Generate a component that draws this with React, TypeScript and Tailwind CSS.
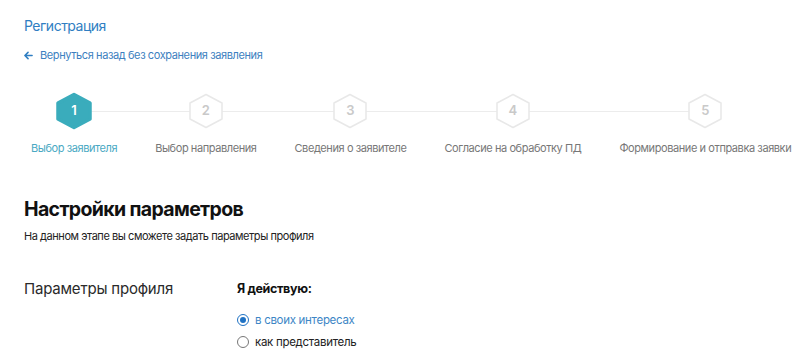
import React from "react";

const steps = [
  "Выбор заявителя",
  "Выбор направления",
  "Сведения о заявителе",
  "Согласие на обработку ПД",
  "Формирование и отправка заявки",
];

function Hex({ active, n }: { active: boolean; n: number }) {
  return (
    <div className="relative w-[38px] h-[38px] flex items-center justify-center">
      <svg width="38" height="38" viewBox="0 0 38 38" className="absolute inset-0">
        <polygon
          points="19,2.5 35,11 35,27 19,35.5 3,27 3,11"
          fill={active ? "#3aacbc" : "#ffffff"}
          stroke={active ? "#3aacbc" : "#e8e8e8"}
          strokeWidth={active ? 3.5 : 1.5}
          strokeLinejoin="round"
        />
      </svg>
      <span
        className={
          "relative text-[13px] font-semibold " +
          (active ? "text-white" : "text-[#c9c9c9]")
        }
      >
        {n}
      </span>
    </div>
  );
}

export default function App() {
  return (
    <div
      className="w-[800px] h-[360px] bg-white overflow-hidden pl-[24px] pt-[16px]"
      style={{ fontFamily: "Inter, 'Noto Sans', sans-serif" }}
    >
      <div className="text-[14px] leading-[20px] tracking-[-0.5px] text-[#2f7ec2]">Регистрация</div>
      <div className="mt-[11px] flex items-center gap-[7px] text-[11px] leading-[16px] tracking-[-0.4px] text-[#3d7fc0]">
        <svg width="9" height="9" viewBox="0 0 10 10" fill="none" stroke="#2f7ec2" strokeWidth="1.7" strokeLinecap="round" strokeLinejoin="round">
          <path d="M9 5H1.5M4.5 1.5L1 5l3.5 3.5" />
        </svg>
        <span>Вернуться назад без сохранения заявления</span>
      </div>

      <div className="relative w-fit ml-[7px] mt-[29px] flex gap-[38px]">
        <div className="absolute left-[44px] right-[84px] top-[19px] h-px bg-[#ececec]" />
        {steps.map((s, i) => (
          <div key={s} className="relative flex flex-col items-center">
            <Hex active={i === 0} n={i + 1} />
            <div
              className={
                "mt-[10px] text-[11px] leading-[16px] tracking-[-0.42px] whitespace-nowrap " +
                (i === 0 ? "text-[#4aa9c3]" : "text-[#777777]")
              }
            >
              {s}
            </div>
          </div>
        ))}
      </div>

      <h1 className="mt-[39px] text-[19.5px] leading-[28px] tracking-[-0.65px] font-bold text-[#111111]">
        Настройки параметров
      </h1>
      <p className="mt-[5px] text-[11px] leading-[16px] tracking-[-0.45px] text-[#222222]">
        На данном этапе вы сможете задать параметры профиля
      </p>

      <div className="mt-[34px] flex">
        <div className="w-[213px] text-[15px] leading-[22px] tracking-[-0.2px] text-[#2a2a2a]">
          Параметры профиля
        </div>
        <div className="flex flex-col">
          <div className="text-[12.5px] leading-[22px] tracking-[-0.35px] font-bold text-[#111111]">Я действую:</div>
          <label className="mt-[11px] flex items-center gap-[6px] text-[11.5px] leading-[18px] tracking-[-0.3px] text-[#3d86c6]">
            <span className="w-[12px] h-[12px] rounded-full border-[1.5px] border-[#1f72c4] flex items-center justify-center">
              <span className="w-[6px] h-[6px] rounded-full bg-[#1f72c4]" />
            </span>
            в своих интересах
          </label>
          <label className="mt-[4px] flex items-center gap-[6px] text-[11.5px] leading-[18px] tracking-[-0.3px] text-[#222222]">
            <span className="w-[12px] h-[12px] rounded-full border border-[#777777]" />
            как представитель
          </label>
        </div>
      </div>
    </div>
  );
}
